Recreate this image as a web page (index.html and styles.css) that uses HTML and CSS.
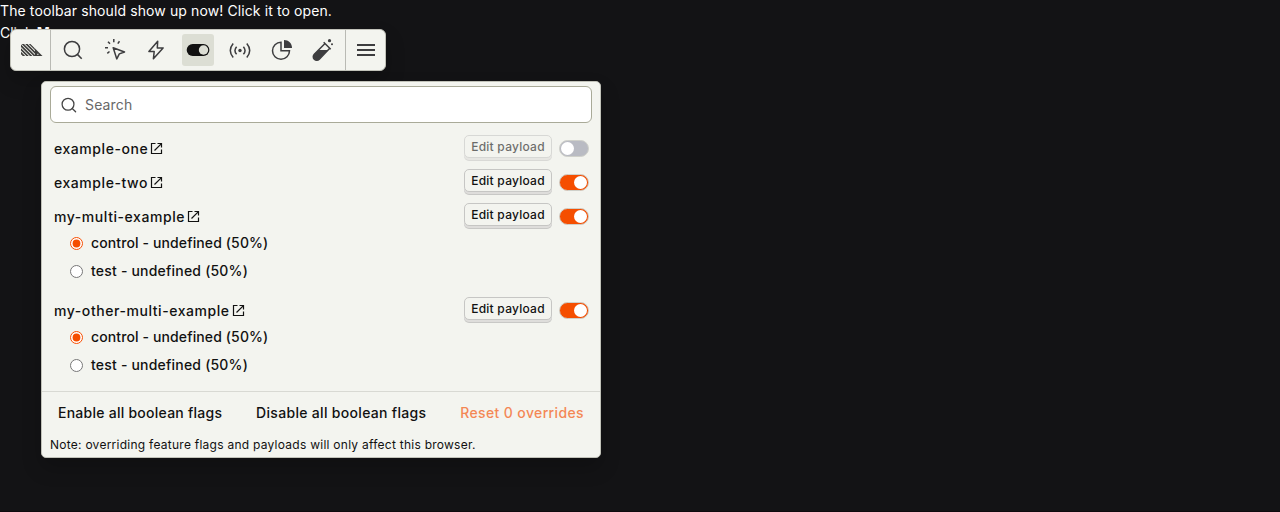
FILE: index.html
```html
<!DOCTYPE html>
<html lang="en">
<head>
<meta charset="utf-8">
<title>Toolbar</title>
<link rel="stylesheet" href="styles.css">
</head>
<body>
<svg class="defs" width="0" height="0">
  <symbol id="search" viewBox="0 0 24 24"><g fill="none" stroke="currentColor" stroke-width="1.700"><circle cx="10.700" cy="11" r="7.900"/><path d="M16.300 16.600 20.800 21.100" stroke-linecap="round"/></g></symbol>
  <symbol id="open" viewBox="0 0 13 13"><path d="M5.500 1.500h-4v10h10v-4M7.500 1.500h4v4M11.200 1.800 4.500 8.500" fill="none" stroke="currentColor" stroke-width="1.200"/></symbol>
</svg>
<div class="page">
  <div class="lead">The toolbar should show up now! Click it to open.</div>
  <div>Click <b>Me</b></div>
</div>
<div class="toolbar">
  <div class="tool logo"><svg width="22" height="12" viewBox="0 0 22 12"><defs><clipPath id="mark"><path d="M0 0h9.500L14 4.500V12H0z"/></clipPath></defs><path d="M-1 8 4 13M-1 4.400 8 13.400M-1 .8 12 13.800M-1-2.800 16 14.200M2-3.400 18 12.600M6-3 18 9" clip-path="url(#mark)" fill="none" stroke="#3d3d3b" stroke-width="1.700"/><path d="M14 4.500 21.500 12H14z" fill="#3d3d3b"/><path d="M16.200 10.300h1.300" stroke="#f3f4ef"/></svg></div>
  <div class="tool"><svg width="20" height="20" viewBox="0 0 20 20" fill="none" stroke="currentColor" stroke-width="1.500"><circle cx="9" cy="9" r="7.600"/><path d="m14.400 14.400 4.300 4.300"/></svg></div>
  <div class="tool"><svg width="22" height="22" viewBox="0 0 22 22" fill="none" stroke="currentColor" stroke-width="1.500"><path d="M9.200 8.800 20.500 13l-5.200 1.900-2.500 5zM9.800 0v3.200M15.500 2.200l-1.700 2.400M4 2.700 6 4.800M1 8.800h3M3.300 14.400l2.200-1.900" stroke-linejoin="round"/></svg></div>
  <div class="tool"><svg width="20" height="20" viewBox="0 0 20 20" fill="none" stroke="currentColor" stroke-width="1.500" stroke-linejoin="round"><path d="M11.700 1.200 2.900 11.500h5.300L7.400 18.800l9.700-10.900h-5.800z"/></svg></div>
  <div class="tool active"><svg width="24" height="14" viewBox="0 0 24 14"><rect x=".7" y="1" width="22.700" height="12" rx="6" fill="#111"/><circle cx="17.500" cy="7" r="4.700" fill="#dcded4"/></svg></div>
  <div class="tool"><svg width="22" height="18" viewBox="0 0 22 18" fill="none" stroke="currentColor" stroke-width="1.500"><circle cx="11" cy="9.500" r="1.700" fill="currentColor" stroke="none"/><path d="M7.600 5.700Q4.300 9.500 7.600 13.300M14.400 5.700Q17.700 9.500 14.400 13.300M4.200 2.500Q-1.600 9.500 4.200 16.500M17.800 2.500Q23.600 9.500 17.800 16.500"/></svg></div>
  <div class="tool"><svg width="22" height="22" viewBox="0 0 22 22"><path d="M10 3.200a8.500 8.500 0 1 0 8.500 8.500H10z" fill="none" stroke="currentColor" stroke-width="1.500"/><path d="M13 1c4.500 0 8 3.200 8 8h-8z" fill="currentColor"/></svg></div>
  <div class="tool"><svg width="22" height="22" viewBox="0 0 22 22" fill="none" stroke="currentColor" stroke-width="1.500"><path d="m11.700 3.200 7 7M13 4.500 2.300 15.200a3.500 3.500 0 0 0 5 5L17.500 9.500"/><path d="M6.500 11h9.300L7.300 20a3.500 3.500 0 0 1-5-5z" fill="currentColor" stroke="none"/><g fill="currentColor" stroke="none"><circle cx="17.500" cy="1.700" r="1.600"/><circle cx="20" cy="5.200" r="1"/></g></svg></div>
  <div class="tool menu"><svg width="18" height="12" viewBox="0 0 18 12"><path d="M0 1h18M0 6h18M0 11h18" stroke="currentColor" stroke-width="2"/></svg></div>
</div>
<div class="panel">
  <div class="search"><svg class="search-icon"><use href="#search"/></svg><span>Search</span></div>
  <div class="flags">
    <div class="row"><span class="name">example-one</span><svg class="open"><use href="#open"/></svg><div class="edit disabled">Edit payload</div><div class="switch"></div></div>
    <div class="row"><span class="name">example-two</span><svg class="open"><use href="#open"/></svg><div class="edit">Edit payload</div><div class="switch on"></div></div>
    <div class="row"><span class="name">my-multi-example</span><svg class="open"><use href="#open"/></svg><div class="edit">Edit payload</div><div class="switch on"></div></div>
    <div class="variants">
      <label class="variant"><input type="radio" name="a" checked>control - undefined (50%)</label>
      <label class="variant test"><input type="radio" name="a">test - undefined (50%)</label>
    </div>
    <div class="row"><span class="name">my-other-multi-example</span><svg class="open"><use href="#open"/></svg><div class="edit">Edit payload</div><div class="switch on"></div></div>
    <div class="variants">
      <label class="variant"><input type="radio" name="b" checked>control - undefined (50%)</label>
      <label class="variant test"><input type="radio" name="b">test - undefined (50%)</label>
    </div>
  </div>
  <div class="footer">
    <div class="actions"><span>Enable all boolean flags</span><span class="disable">Disable all boolean flags</span><span class="reset">Reset 0 overrides</span></div>
    <div class="note">Note: overriding feature flags and payloads will only affect this browser.</div>
  </div>
</div>
</body>
</html>
```
FILE: styles.css
```css
* { box-sizing: border-box; }
html { background: #131315; }
body { margin: 0; height: 512px; overflow: hidden; position: relative; border-bottom: 1px solid #0e0a0e; font: 14px/22px Inter, sans-serif; color: #111; }
.defs { position: absolute; }
.page { color: #fff; }
.lead { letter-spacing: .11px; }
.toolbar, .panel { position: absolute; background: #f3f4ef; border: 1px solid #c1c2b9; box-shadow: 0 10px 20px rgba(0, 0, 0, .2); }
.toolbar { left: 10px; top: 29px; width: 376px; height: 42px; border-radius: 6px; display: flex; align-items: center; color: #3d3d3f; }
.tool { width: 41.700px; height: 32px; flex: none; display: flex; align-items: center; justify-content: center; }
.tool svg { flex: none; }
.tool.logo { width: 40px; height: 40px; border-right: 1px solid #b9bab4; margin-right: 1px; }
.logo svg { margin-left: 2px; }
.tool.active { width: 32px; margin: 0 5px; background: #dcded4; border-radius: 3px; }
.tool.menu { width: 41px; height: 40px; border-left: 1px solid #b9bab4; margin-left: auto; margin-right: -1px; }
.panel { left: 41px; top: 81px; width: 560px; height: 377px; border-radius: 5px; }
.search { margin: 4px 8px 0; height: 37px; background: #fff; border: 1px solid #a9aa98; border-radius: 6px; display: flex; align-items: center; padding-left: 9px; gap: 7px; color: #686868; letter-spacing: .15px; }
.search-icon { width: 18px; height: 18px; color: #444; }
.flags { padding: 9px 12px 0; height: 268px; font-weight: 500; }
.row { height: 34px; display: flex; align-items: center; }
.name { letter-spacing: .56px; }
.open { width: 13px; height: 13px; margin: -1px 0 0 2px; color: #111; }
.edit { margin-left: auto; width: 88px; height: 23px; margin-top: -5px; border: 1px solid #c6c6c4; border-radius: 5px; box-shadow: 0 2px 0 #dedddb, 0 3px 0 #c8c8c6; font-size: 12px; line-height: 21px; text-align: center; letter-spacing: .25px; }
.disabled { opacity: .6; }
.switch { width: 30px; height: 17px; margin: -1px -1px 0 7px; border: 1px solid #cfd0ca; border-radius: 9px; background: #b9bbc3; display: flex; align-items: center; padding: 0 1px; }
.switch::before { content: ""; width: 13px; height: 13px; background: #fff; border-radius: 50%; }
.switch.on { background: #f54e00; justify-content: flex-end; }
.variants { height: 60px; margin-top: -5px; margin-bottom: 5px; padding-left: 16px; }
.variant { height: 28px; display: flex; align-items: center; letter-spacing: .12px; }
.test { letter-spacing: .2px; }
.variant input { width: 13px; height: 13px; margin: 0 8px 0 0; accent-color: #f54e00; }
.footer { border-top: 1px solid #d8d9d3; }
.actions { display: flex; justify-content: space-between; padding: 10px 16px 0; font-weight: 500; letter-spacing: .25px; }
.disable { letter-spacing: .31px; }
.reset { color: #f54e00; opacity: .65; letter-spacing: .37px; }
.note { font-size: 12px; line-height: 16px; padding: 13px 8px 0; letter-spacing: .255px; }
```
